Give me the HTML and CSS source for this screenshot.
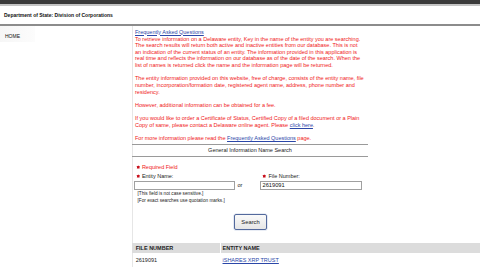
FILE: index.html
```html
<!DOCTYPE html>
<html>
<head>
<meta charset="utf-8">
<link rel="stylesheet" href="styles.css">
</head>
<body>
<div class="topbar"></div>
<div class="topband"></div>
<div class="header"><span class="title">Department of State: Division of Corporations</span></div>
<div class="main">
  <div class="side"><div class="home">HOME</div></div>
  <div class="content">
    <a class="link faq" href="#">Frequently Asked Questions</a>
    <p class="red">To retrieve information on a Delaware entity, Key in the name of the entity you are searching.<br>The search results will return both active and inactive entities from our database. This is not<br>an indication of the current status of an entity. The information provided in this application is<br>real time and reflects the information on our database as of the date of the search. When the<br>list of names is returned click the name and the information page will be returned.</p>
    <p class="red">The entity information provided on this website, free of charge, consists of the entity name, file<br>number, incorporation/formation date, registered agent name, address, phone number and<br>residency.</p>
    <p class="red">However, additional information can be obtained for a fee.</p>
    <p class="red">If you would like to order a Certificate of Status, Certified Copy of a filed document or a Plain<br>Copy of same, please contact a Delaware online agent. Please <a class="link" href="#">click here</a>.</p>
    <p class="red last">For more information please read the <a class="link" href="#">Frequently Asked Questions</a> page.</p>
    <div class="form">
      <div class="formtitle">General Information Name Search</div>
      <div class="req"><svg class="star" viewBox="0 0 10 10"><path d="M5 0.3 L6.2 3 L9.3 3 L6.9 5 L8.2 8.6 L5 6.8 L1.8 8.6 L3.1 5 L0.7 3 L3.8 3 Z" fill="#c8101c"/><circle cx="5" cy="5" r="2.7" fill="#c8101c"/></svg><span class="redtxt">Required Field</span></div>
      <div class="fields">
        <div class="field f1">
          <div class="label"><svg class="star" viewBox="0 0 10 10"><path d="M5 0.3 L6.2 3 L9.3 3 L6.9 5 L8.2 8.6 L5 6.8 L1.8 8.6 L3.1 5 L0.7 3 L3.8 3 Z" fill="#c8101c"/><circle cx="5" cy="5" r="2.7" fill="#c8101c"/></svg>Entity Name:</div>
          <div class="input"></div>
        </div>
        <div class="or">or</div>
        <div class="field f2">
          <div class="label"><svg class="star" viewBox="0 0 10 10"><path d="M5 0.3 L6.2 3 L9.3 3 L6.9 5 L8.2 8.6 L5 6.8 L1.8 8.6 L3.1 5 L0.7 3 L3.8 3 Z" fill="#c8101c"/><circle cx="5" cy="5" r="2.7" fill="#c8101c"/></svg>File Number:</div>
          <div class="input">2619091</div>
        </div>
      </div>
      <div class="note">[This field is not case sensitive.]</div>
      <div class="note">[For exact searches use quotation marks.]</div>
      <div class="btnrow"><div class="btn">Search</div></div>
    </div>
    <div class="results">
      <div class="rhead"><div class="c1">FILE NUMBER</div><div class="c2">ENTITY NAME</div></div>
      <div class="rrow"><div class="c1">2619091</div><div class="c2"><a class="link" href="#">iSHARES XRP TRUST</a></div></div>
    </div>
  </div>
</div>
</body>
</html>
```
FILE: styles.css
```css
html, body { margin: 0; padding: 0; background: #fff; }
body { font-family: "Liberation Sans", Arial, sans-serif; color: #222; width: 480px; height: 270px; overflow: hidden; }
.topbar { height: 4px; background: #3a3a3a; }
.topband { height: 2px; background: #c4c4c4; }
.header { height: 18px; border-bottom: 2px solid #8c8c8c; display: flex; align-items: center; padding-left: 4px; box-sizing: border-box; height: 20px; }
.title { font-weight: bold; font-size: 5px; color: #111; }
.main { display: flex; }
.side { width: 132px; flex: none; }
.home { font-size: 5px; padding: 7px 0 0 5px; background: linear-gradient(90deg, #f6f6f6, #fcfcfc); width: 30px; height: 9px; color: #111; }
.content { border-left: 1px solid #e6e6e6; padding-left: 2px; flex: 1; min-width: 0; }
.link { color: #2b47a8; text-decoration: underline; }
.faq { display: block; font-size: 5.5px; margin-top: 1.5px; line-height: 8px; }
.red { color: #f01818; font-size: 5.5px; line-height: 6.65px; margin: 0 0 6.65px 0; white-space: nowrap; }
.red.last { margin-bottom: 2.1px; }
.form { width: 236px; margin-left: -3px; }
.formtitle { border-top: 1px solid #9a9a9a; border-bottom: 1px solid #9a9a9a; text-align: center; font-size: 5.5px; height: 11px; line-height: 11px; }
.req { display: flex; align-items: center; margin: 6px 0 0 3.5px; font-size: 5.5px; height: 8px; }
.star { width: 4.4px; height: 4.4px; margin-right: 2px; flex: none; }
.redtxt { color: #f01818; }
.fields { display: flex; align-items: flex-end; margin-top: 1px; }
.field { display: flex; flex-direction: column; }
.f1 { margin-left: 2px; }
.label { display: flex; align-items: center; font-size: 5.5px; height: 8px; margin-left: 1.5px; margin-bottom: 1px; }
.f2 .label { margin-left: 2px; }
.input { height: 9px; border: 1px solid #a0a0a0; font-size: 5.7px; line-height: 7px; padding-left: 1.5px; box-sizing: border-box; color: #111; }
.f1 .input { width: 101px; }
.f2 .input { width: 102px; }
.or { font-size: 5.5px; width: 25px; padding-left: 2.5px; box-sizing: border-box; line-height: 9px; }
.note { font-size: 4.7px; margin-left: 5.5px; line-height: 7px; }
.btnrow { display: flex; justify-content: center; margin-top: 10px; padding-left: 1px; }
.btn { width: 33px; height: 16px; box-sizing: border-box; border: 1px solid #53699c; border-radius: 2px; background: linear-gradient(#fafafa, #e6e6e6); font-size: 5.8px; line-height: 14px; text-align: center; box-shadow: 0 0 0 0.6px #d3dbeb; }
.results { margin-top: 13px; margin-left: -3px; }
.rhead { display: flex; background: #dcdcdc; height: 10px; line-height: 10px; font-weight: bold; font-size: 5.5px; }
.rrow { display: flex; height: 14px; line-height: 14px; font-size: 5.5px; }
.c1 { width: 89px; padding-left: 3.7px; box-sizing: border-box; border-right: 1.5px solid #fff; flex: none; }
.c2 { padding-left: 1.5px; }
```
